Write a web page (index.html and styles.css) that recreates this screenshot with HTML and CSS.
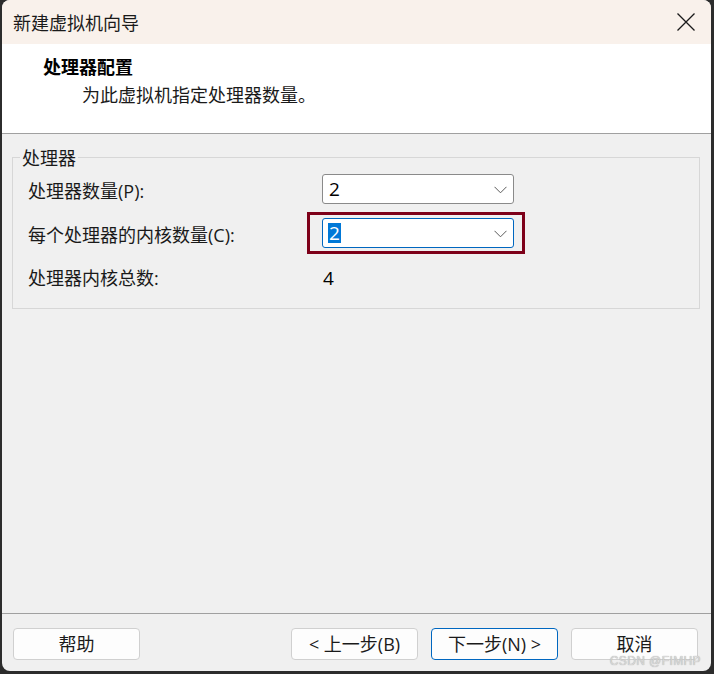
FILE: index.html
```html
<!DOCTYPE html>
<html lang="zh-CN">
<head>
<meta charset="utf-8">
<title>新建虚拟机向导</title>
<link rel="stylesheet" href="styles.css">
</head>
<body>
<div class="window">
  <div class="titlebar">
    <span class="title">新建虚拟机向导</span>
    <span class="close">
      <svg width="20" height="20" viewBox="0 0 20 20"><path d="M1.5 1.5 L18.5 18.5 M18.5 1.5 L1.5 18.5" stroke="#1a1a1a" stroke-width="1.3" fill="none"/></svg>
    </span>
  </div>
  <div class="header">
    <div class="h-title">处理器配置</div>
    <div class="h-sub">为此虚拟机指定处理器数量。</div>
  </div>
  <div class="content">
    <fieldset class="group">
      <legend class="legend">处理器</legend>
      <div class="row r1">
        <span class="label">处理器数量(P):</span>
        <div class="combo">
          <span class="val">2</span>
          <svg class="chev" width="13" height="8" viewBox="0 0 13 8"><polyline points="0.5,0.8 6.5,6.8 12.5,0.8" stroke="#5a5a5a" stroke-width="1" fill="none"/></svg>
        </div>
      </div>
      <div class="row r2">
        <span class="label">每个处理器的内核数量(C):</span>
        <div class="focus-wrap">
          <div class="combo focused">
            <span class="val sel">2</span>
            <svg class="chev" width="13" height="8" viewBox="0 0 13 8"><polyline points="0.5,0.8 6.5,6.8 12.5,0.8" stroke="#5a5a5a" stroke-width="1" fill="none"/></svg>
          </div>
        </div>
      </div>
      <div class="row r3">
        <span class="label">处理器内核总数:</span>
        <span class="total">4</span>
      </div>
    </fieldset>
  </div>
  <div class="footer">
    <button class="btn">帮助</button>
    <div class="spacer"></div>
    <button class="btn">&lt; 上一步(B)</button>
    <button class="btn primary">下一步(N) &gt;</button>
    <button class="btn">取消</button>
    <span class="watermark">CSDN @FIMHP</span>
  </div>
</div>
</body>
</html>
```
FILE: styles.css
```css
*, *::before, *::after { box-sizing: border-box; }
html, body { margin: 0; padding: 0; }
body {
  background: #2c2c2c;
  width: 714px;
  height: 674px;
  overflow: hidden;
  font-family: "Open Sans", "Noto Sans CJK SC", sans-serif;
  font-size: 18px;
  color: #1a1a1a;
}
.window {
  margin-left: 2px;
  width: 709px;
  height: 671px;
  border-radius: 8px;
  overflow: hidden;
  background: #f0f0f0;
  display: flex;
  flex-direction: column;
}
.titlebar {
  height: 44px;
  flex: none;
  background: #f9f1eb;
  display: flex;
  align-items: center;
  justify-content: space-between;
  padding: 0 15px 0 11px;
}
.title {
  font-family: "Noto Sans CJK SC", sans-serif;
  font-size: 18px;
  line-height: 24px;
  color: #1a1a1a;
}
.close { display: flex; }
.header {
  height: 90px;
  flex: none;
  background: #ffffff;
  border-bottom: 1px solid #a0a0a0;
  padding: 10px 0 0 41px;
  font-family: "Noto Sans CJK SC", sans-serif;
}
.h-title {
  font-weight: 700;
  font-size: 18px;
  line-height: 24px;
  color: #000;
}
.h-sub {
  margin-top: 4px;
  padding-left: 39px;
  font-size: 18px;
  line-height: 24px;
  color: #1a1a1a;
}
.content {
  flex: 1;
  padding: 11px 11px 0 10px;
}
.group {
  margin: 0;
  border: 1px solid #d7d7d7;
  padding: 5px 0 18px 15px;
  min-width: 0;
}
.legend {
  padding: 0 2px;
  margin-left: -8px;
  font-family: "Noto Sans CJK SC", sans-serif;
  font-size: 18px;
  line-height: 24px;
  color: #1a1a1a;
}
.row {
  display: grid;
  grid-template-columns: 294px 192px;
  align-items: center;
}
.r1 { height: 30px; }
.r2 { height: 30px; margin-top: 14px; }
.r3 { height: 24px; margin-top: 18px; }
.label {
  line-height: 24px;
  color: #1a1a1a;
  position: relative;
  top: 2px;
}
.r3 .label { top: 0; }
.combo {
  height: 30px;
  width: 192px;
  background: #fff;
  border: 1px solid #8a8a8a;
  border-radius: 3px;
  display: flex;
  align-items: center;
  justify-content: space-between;
  padding: 0 6px 0 5px;
}
.focus-wrap {
  position: relative;
}
.focus-wrap::before {
  content: "";
  position: absolute;
  left: -15px;
  top: -6px;
  width: 218px;
  height: 42px;
  border: 3px solid #7d0019;
}
.combo.focused { border-color: #0067c0; position: relative; }
.val {
  font-size: 19px;
  line-height: 20px;
  color: #000;
  padding: 0 1px;
}
.val.sel {
  background: #0078d7;
  color: #fff;
}
.chev { margin-top: 1px; }
.total {
  font-size: 19px;
  line-height: 24px;
  color: #000;
  padding-left: 1px;
}
.footer {
  flex: none;
  height: 58px;
  border-top: 1px solid #a0a0a0;
  display: flex;
  align-items: flex-start;
  gap: 13px;
  padding: 14px 13px 0 11px;
  position: relative;
}
.spacer { flex: 1; }
.btn {
  width: 127px;
  height: 32px;
  background: #fdfdfd;
  border: 1px solid #d0d0d0;
  border-radius: 4px;
  font-family: "Open Sans", "Noto Sans CJK SC", sans-serif;
  font-size: 18px;
  line-height: 24px;
  color: #1a1a1a;
  padding: 0;
  margin: 0;
}
.btn.primary { border-color: #0067c0; }
.watermark {
  position: absolute;
  right: 10px;
  bottom: 3px;
  font-family: "Liberation Sans", sans-serif;
  font-size: 12px;
  line-height: 13px;
  color: #d8d8d8;
  text-shadow: 0 0 1px #9a9a9a;
  letter-spacing: 0.4px;
}
```
